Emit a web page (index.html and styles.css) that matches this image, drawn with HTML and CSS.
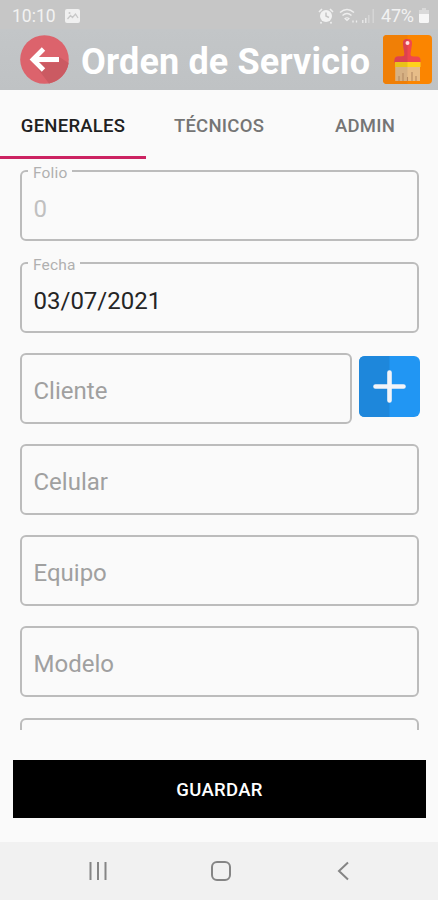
FILE: index.html
```html
<!DOCTYPE html>
<html lang="es">
<head>
<meta charset="utf-8">
<title>Orden de Servicio</title>
<link rel="stylesheet" href="styles.css">
</head>
<body>
<div class="status">
  <span class="clock">10:10</span>
  <svg class="photo" width="15" height="14" viewBox="0 0 15 14"><rect width="15" height="14" rx="2" fill="#f0f0f0"/><path d="M2.500 10l3-3.500 2 2L10.500 5l2.500 4" fill="none" stroke="#c8c8c8" stroke-width="1.300"/><circle cx="4.500" cy="4" r="1" fill="#c8c8c8"/></svg>
  <svg class="signals" width="58" height="18" viewBox="0 0 58 18">
    <g fill="none" stroke="#eeeeee">
      <path d="M1 5l3-3M15 5l-3-3M3.500 15l-1 1.500M12.500 15l1 1.500" stroke-width="1.600"/>
      <path d="M22 5.500q7-6 14 0M24.500 8.500q4.500-4 9 0" stroke-width="1.500"/>
      <path d="M27 11.500q2-1.500 4 0l-2 2z" stroke-width="1.200"/>
      <path d="M35 13.500v2M38.500 13.500v2" stroke-width="1.300"/>
    </g>
    <circle cx="8" cy="9" r="6" fill="#f2f2f2"/>
    <path d="M8 5.500V9l3 1.500" fill="none" stroke="#c6c6c6" stroke-width="1.500"/>
    <path d="M44 13h1.500v3H44zM47 11h1.500v5H47z" fill="#e6e6e6"/>
    <path d="M50 8h1.500v8H50zM54.500 2h1.500v14h-1.500z" fill="#d5d5d5"/>
  </svg>
  <span class="percent">47%</span>
  <svg class="battery" width="10" height="15" viewBox="0 0 10 15"><path d="M3 0h4v2h3v5H0V2h3z" fill="#d9d9d9"/><path d="M0 6h10v7.500q0 1.500-1.500 1.500h-7Q0 15 0 13.500z" fill="#f6f6f6"/></svg>
</div>
<header class="bar">
  <svg class="back" width="49" height="49" viewBox="0 0 49 49">
    <circle cx="24.500" cy="24.500" r="24.300" fill="#dc636c"/>
    <path d="M38.500 21.500L48.600 28A24.300 24.300 0 0 1 29 48.400L13 27.500h25.500z" fill="#cb5a62"/>
    <path d="M39 24.500H13M23.500 14L13 24.500 23.500 35" fill="none" stroke="#fff" stroke-width="4.800"/>
  </svg>
  <h1 class="title">Orden de Servicio</h1>
  <svg class="brush" width="49" height="49" viewBox="0 0 49 49">
    <rect width="49" height="49" rx="4" fill="#fb8500"/>
    <path d="M4 0h20.500v49H4q-4 0-4-4V4q0-4 4-4z" fill="#f07f06"/>
    <path d="M24.500 4q5 0 4.500 5l-1.500 10q0 2.500 3 2.500H34q3.500 0 3.500 4v2h-26v-2q0-4 3.500-4h3.500q3 0 3-2.500L20 9q-.5-5 4.500-5z" fill="#f0484d"/>
    <path d="M24.500 4q-5 0-4.500 5l1.500 10q0 2.500-3 2.500H15q-3.500 0-3.500 4v2h13z" fill="#dc4250"/>
    <circle cx="24.500" cy="8" r="2" fill="#ffe0df"/>
    <path d="M12.500 31h24.500v15H12.500z" fill="#e7bd88"/>
    <path d="M12.500 31h12v15h-12z" fill="#d6b184"/>
    <path d="M12 27h25.500v5H12z" fill="#ffd21c"/>
    <path d="M12 27h12.500v5H12z" fill="#e9c219"/>
    <path d="M16 41v5M20 38v8M24.500 42v4M29 37v9M33 41v5" stroke="#b58a63" stroke-width="1.100"/>
  </svg>
</header>
<nav class="tabs">
  <span class="tab active">GENERALES</span>
  <span class="tab">TÉCNICOS</span>
  <span class="tab">ADMIN</span>
</nav>
<main class="form">
  <fieldset class="field"><legend><span>Folio</span></legend><span class="muted">0</span></fieldset>
  <fieldset class="field"><legend><span>Fecha</span></legend><span class="value">03/07/2021</span></fieldset>
  <div class="row">
    <div class="field plain">Cliente</div>
    <svg class="add" width="61" height="61" viewBox="0 0 61 61"><rect width="61" height="61" rx="6" fill="#2196f3"/><path d="M6 0h24.500v61H6q-6 0-6-6V6q0-6 6-6z" fill="#1e87db"/><path d="M30.500 16.500v28M16.500 30.500h28" stroke="#f3f4f8" stroke-width="4.600" stroke-linecap="round"/></svg>
  </div>
  <div class="field plain">Celular</div>
  <div class="field plain">Equipo</div>
  <div class="field plain">Modelo</div>
  <div class="field plain"></div>
</main>
<div class="actions"><button class="save">GUARDAR</button></div>
<footer class="system">
  <svg width="20" height="20" viewBox="0 0 20 20"><path d="M2.500 1v18M10 1v18M17.500 1v18"/></svg>
  <svg width="20" height="20" viewBox="0 0 20 20"><rect x="1" y="1" width="18" height="18" rx="5"/></svg>
  <svg width="20" height="20" viewBox="0 0 20 20"><path d="M15 1.500L6 10l9 8.500"/></svg>
</footer>
</body>
</html>
```
FILE: styles.css
```css
* { box-sizing: border-box; }
body {
  margin: 0;
  width: 438px;
  height: 900px;
  display: flex;
  flex-direction: column;
  overflow: hidden;
  background: #fafafa;
  font-family: Roboto, sans-serif;
}
.status {
  height: 29px;
  flex: none;
  display: flex;
  align-items: center;
  padding: 2px 9px 0 12px;
  background: #c6c6c6;
  color: #f2f2f2;
  font-size: 17.500px;
}
.clock { width: 44px; }
.photo { margin-left: 9px; }
.signals { margin-left: auto; }
.percent { margin-left: 5px; width: 36px; font-size: 18px; letter-spacing: -.2px; }
.battery { margin-left: 2px; }
.bar {
  height: 61px;
  flex: none;
  display: flex;
  align-items: center;
  padding: 0 6px 0 20px;
  background: linear-gradient(#c3c6c8, #bfc2c4);
}
.title {
  margin: 4px 0 0 12px;
  font-size: 36px;
  line-height: 42px;
  letter-spacing: .15px;
  font-weight: 700;
  color: #fff;
  white-space: nowrap;
}
.back, .brush { flex: none; }
.brush { margin-left: auto; }
.tabs { height: 69px; flex: none; display: flex; }
.tab {
  flex: 1;
  display: flex;
  align-items: center;
  justify-content: center;
  padding-top: 6px;
  border-bottom: 3px solid transparent;
  font-size: 18.500px;
  letter-spacing: .25px;
  font-weight: 500;
  color: #757575;
}
.tab.active { color: #212121; border-color: #cc2362; }
.form {
  height: 571px;
  flex: none;
  display: flex;
  flex-direction: column;
  gap: 20.200px;
  padding: 11.400px 19px 0 20px;
  overflow: hidden;
}
.field {
  flex: none;
  height: 71px;
  width: 100%;
  border: 2px solid #bcbcbc;
  border-radius: 6px;
  padding: 0 11.500px;
  margin: 0;
  min-width: 0;
  font-size: 24px;
  color: #a0a0a0;
}
fieldset.field { height: 79px; margin-top: -8px; padding: 0 6px; }
legend {
  padding: 0 5px;
  font-size: 15.500px;
  line-height: 18px;
  letter-spacing: .15px;
  color: #b0b0b0;
}
legend span { position: relative; top: 2px; }
.muted, .value { display: block; margin: 13px 0 0 5.500px; line-height: 32px; }
.muted { color: #c0c0c0; }
.value { color: #252525; }
.plain { display: flex; align-items: center; padding-top: 5px; }
.row { display: flex; gap: 7px; align-items: center; flex: none; margin-right: -1.500px; }
.row .field { flex: 0 0 332px; }
.add { flex: none; margin-top: -3px; }
.actions { height: 112px; flex: none; padding: 30px 12px 0 13px; }
.save {
  display: block;
  width: 100%;
  height: 58px;
  border: 0;
  padding: 2px 0 0;
  background: #000;
  color: #fff;
  font: 500 18.500px Roboto, sans-serif;
  letter-spacing: .3px;
}
.system {
  flex: 1;
  display: flex;
  justify-content: space-between;
  align-items: center;
  padding: 0 85px 0 88px;
  background: #f1f1f1;
}
.system svg { fill: none; stroke: #858585; stroke-width: 2; }
```
